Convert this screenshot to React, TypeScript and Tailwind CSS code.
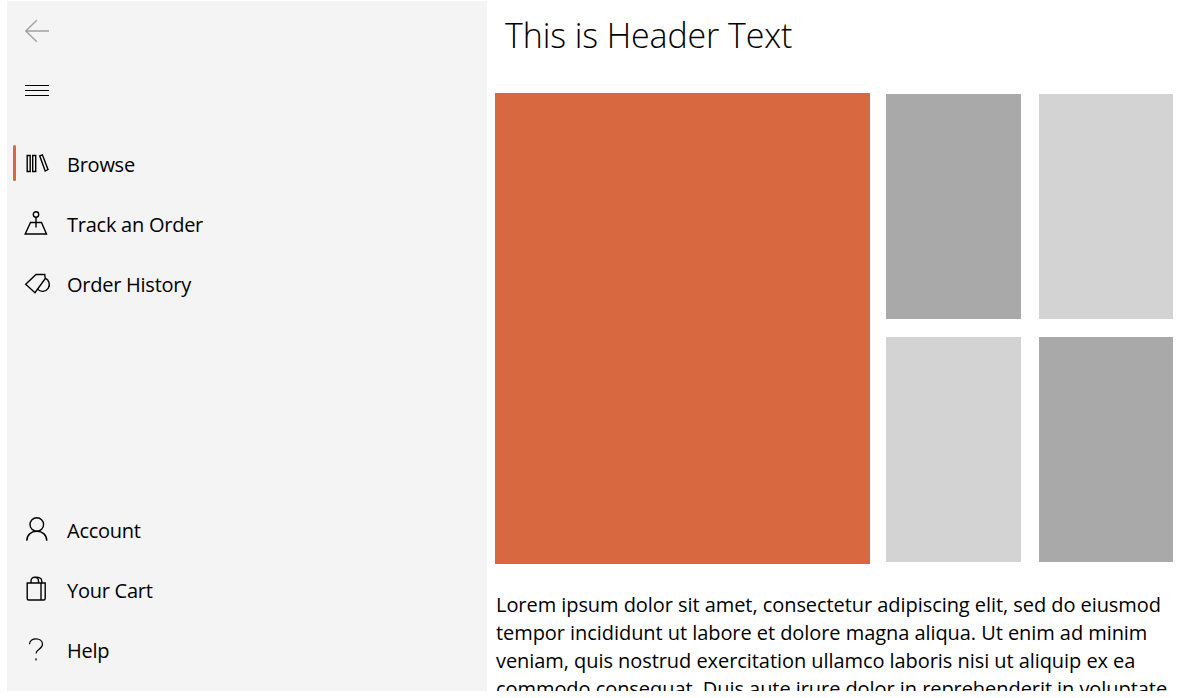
import React from 'react';

const navTop = [
  { label: 'Browse', icon: <BrowseIcon />, active: true },
  { label: 'Track an Order', icon: <TrackIcon /> },
  { label: 'Order History', icon: <TagIcon /> },
];

const navBottom = [
  { label: 'Account', icon: <AccountIcon /> },
  { label: 'Your Cart', icon: <BagIcon /> },
  { label: 'Help', icon: <HelpIcon /> },
];

function Glyph({ children }: { children: React.ReactNode }) {
  return (
    <svg className="overflow-visible" width="26" height="26" viewBox="0 0 26 26" fill="none" stroke="currentColor" strokeWidth="1.4">
      {children}
    </svg>
  );
}

function BackIcon() {
  return (
    <Glyph>
      <path d="M1.500 13H25M12.800 2.200 1.800 13l11 10.800" />
    </Glyph>
  );
}

function MenuIcon() {
  return (
    <Glyph>
      <path d="M1 8.500h24M1 13.500h24M1 18.500h24" strokeWidth="1" />
    </Glyph>
  );
}

function BrowseIcon() {
  return (
    <Glyph>
      <path d="M3.200 3.500h3v16h-3zM8.700 3.500h3v16h-3zM15.700 3.800l2.700-1 5.600 14.700-2.800 1.500z" />
    </Glyph>
  );
}

function TrackIcon() {
  return (
    <Glyph>
      <circle cx="12" cy="2.500" r="2.700" />
      <path d="M12 5.200V15.500M6.500 10.500h11l5 11.500H1.200z" />
    </Glyph>
  );
}

function TagIcon() {
  return (
    <Glyph>
      <path d="M1.700 12.300 12 2.500h8.700l.6 4L11 20.700z" />
      <path d="M21 6.200A6.800 6.800 0 1 1 13.500 17.100" />
    </Glyph>
  );
}

function AccountIcon() {
  return (
    <Glyph>
      <circle cx="12.800" cy="6.500" r="6.800" />
      <path d="M2.800 22.800C2.800 17 7 13.300 12.800 13.300S22.800 17 22.800 22.800" />
    </Glyph>
  );
}

function BagIcon() {
  return (
    <Glyph>
      <path d="M3.200 5h18v15.500a1.500 1.500 0 0 1-1.500 1.500H4.700a1.500 1.500 0 0 1-1.500-1.500z" />
      <path d="M17 5v17M7 5V3C7 .8 8.700-.8 10.700-.8S14.500.8 14.500 3v2M11-.6c2.500-.8 6.800.2 6.800 3.600v2" />
    </Glyph>
  );
}

function HelpIcon() {
  return (
    <Glyph>
      <path d="M5.500 6.300C5.500 2.600 8.500.8 12 .8s6.500 2 6.500 5.500c0 5-6.500 4.800-6.500 9.200" strokeWidth="1.200" />
      <path d="M12 20.300v2.200" strokeWidth="1.200" />
    </Glyph>
  );
}

function NavItem({ label, icon, active }: { label: string; icon: React.ReactNode; active?: boolean }) {
  return (
    <div className="relative flex h-[60px] items-center pl-[17px]">
      {active && <div className="absolute left-[6px] top-[10px] h-[36px] w-[3px] rounded-full bg-[#d86840]" />}
      <span className="flex w-[43px] items-center text-black">{icon}</span>
      <span className="text-[20px] tracking-[-0.25px] text-black">{label}</span>
    </div>
  );
}

export default function App() {
  return (
    <div className="flex h-[698px] w-[1194px] overflow-hidden bg-white pb-[7px] pl-[7px] pt-px font-['Open_Sans',sans-serif]">
      <aside className="flex w-[480px] shrink-0 flex-col bg-[#f4f4f4] pb-[10px]">
        <div className="flex h-[60px] items-center pl-[17px] text-[#a0a0a0]">
          <BackIcon />
        </div>
        <div className="flex h-[58px] items-center pl-[17px] text-black">
          <MenuIcon />
        </div>
        <nav className="mt-[16px] flex flex-col">
          {navTop.map(item => (
            <NavItem key={item.label} {...item} />
          ))}
        </nav>
        <nav className="mt-auto flex flex-col">
          {navBottom.map(item => (
            <NavItem key={item.label} {...item} />
          ))}
        </nav>
      </aside>
      <main className="min-w-0 flex-1 overflow-hidden pl-[8px] pr-[21px]">
        <h1 className="h-[92px] pl-[10px] pt-[8px] text-[34px] font-light leading-[52px] tracking-[-0.12px] text-black">
          This is Header Text
        </h1>
        <div className="flex items-start">
          <div className="h-[471px] w-[375px] shrink-0 bg-[#d86840]" />
          <div className="ml-[16px] mt-px grid grid-cols-[135px_134px] gap-x-[18px] gap-y-[18px]">
            <div className="h-[225px] bg-[#a9a9a9]" />
            <div className="h-[225px] bg-[#d3d3d3]" />
            <div className="h-[225px] bg-[#d3d3d3]" />
            <div className="h-[225px] bg-[#a9a9a9]" />
          </div>
        </div>
        <p className="mt-[27px] pl-px text-[20px] leading-[28px] tracking-[-0.06px] text-black">
          Lorem ipsum dolor sit amet, consectetur adipiscing elit, sed do eiusmod tempor incididunt ut labore et dolore
          magna aliqua. Ut enim ad minim veniam, quis nostrud exercitation ullamco laboris nisi ut aliquip ex ea commodo
          consequat. Duis aute irure dolor in reprehenderit in voluptate velit esse cillum dolore eu fugiat nulla pariatur.
        </p>
      </main>
    </div>
  );
}
